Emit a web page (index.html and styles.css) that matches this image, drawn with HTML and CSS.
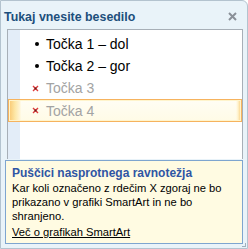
FILE: index.html
```html
<!DOCTYPE html>
<html>
<head>
<meta charset="utf-8">
<link rel="stylesheet" href="styles.css">
</head>
<body>
<div class="window">
  <div class="header">
    <span class="title">Tukaj vnesite besedilo</span>
    <svg class="close" width="9" height="9" viewBox="0 0 9 9"><path d="M1 1L8 8M8 1L1 8" stroke="#8a9098" stroke-width="2"/></svg>
  </div>
  <div class="editor">
    <div class="row">
      <span class="mark"><span class="dot"></span></span>
      <span class="txt">Točka 1 – dol</span>
    </div>
    <div class="row">
      <span class="mark"><span class="dot"></span></span>
      <span class="txt">Točka 2 – gor</span>
    </div>
    <div class="row off">
      <span class="mark"><svg width="7" height="7" viewBox="0 0 7 7"><path d="M1 1L6 6M6 1L1 6" stroke="#e03a3a" stroke-width="1.4"/><rect x="2.5" y="2.5" width="2" height="2" fill="#6a1a1a"/></svg></span>
      <span class="txt">Točka 3</span>
    </div>
    <div class="row off sel">
      <span class="mark"><svg width="7" height="7" viewBox="0 0 7 7"><path d="M1 1L6 6M6 1L1 6" stroke="#e03a3a" stroke-width="1.4"/><rect x="2.5" y="2.5" width="2" height="2" fill="#6a1a1a"/></svg></span>
      <span class="txt">Točka 4</span>
    </div>
  </div>
  <div class="note">
    <div class="note-title">Puščici nasprotnega ravnotežja</div>
    <p class="note-body">Kar koli označeno z rdečim X zgoraj ne bo prikazano v grafiki SmartArt in ne bo shranjeno.</p>
    <a class="note-link">Več o grafikah SmartArt</a>
  </div>
  <div class="grip"></div>
</div>
</body>
</html>
```
FILE: styles.css
```css
html, body {
  margin: 0;
  padding: 0;
  width: 248px;
  height: 249px;
  overflow: hidden;
  background: #ffffff;
}
.window {
  box-sizing: border-box;
  width: 248px;
  height: 249px;
  background: #e9f3f9;
  border: 1px solid #b3c3cf;
  border-top-right-radius: 6px;
  position: relative;
  font-family: "Liberation Sans", Arial, sans-serif;
}
.header {
  height: 28px;
  display: flex;
  align-items: center;
  justify-content: space-between;
  padding: 0 10px 0 3px;
}
.title {
  font-weight: bold;
  font-size: 12.4px;
  color: #1d4f7c;
  margin-top: 4px;
}
.close {
  margin-top: 3px;
}
.editor {
  box-sizing: border-box;
  margin-left: 6px;
  width: 236px;
  height: 130px;
  border: 1px solid #a7afb7;
  border-bottom: none;
  background: linear-gradient(to right, #e3edf8 0, #e3edf8 12px, #ffffff 12px);
  padding-top: 3px;
}
.row {
  box-sizing: border-box;
  height: 22px;
  display: flex;
  align-items: center;
  font-size: 14px;
  color: #000;
}
.mark {
  width: 38px;
  display: flex;
  justify-content: flex-end;
  padding-right: 7px;
  box-sizing: border-box;
}
.dot {
  width: 4px;
  height: 4px;
  border-radius: 50%;
  background: #000;
}
.off .txt {
  color: #a3a3a3;
}
.sel {
  height: 23px;
  width: 234px;
  border: 1px solid #f6b35e;
  box-shadow: inset 0 0 0 1px #fff4cc;
  background:
    linear-gradient(to right, #f9c770 0, #fde7a6 6px, #fff5d6 11px, rgba(255,255,255,0) 12px),
    linear-gradient(to left, #f9cd7a 0, #fff2cc 3px, rgba(255,255,255,0) 5px),
    linear-gradient(to bottom, #fffdf4, #fffbe6);
}
.sel .mark {
  width: 37px;
}
.note {
  box-sizing: border-box;
  margin: 1px 0 0 4px;
  width: 238px;
  height: 84px;
  border: 1px solid #7ea5cf;
  background: #fffbe2;
  padding: 5px 6px 0 6px;
  font-size: 11.2px;
  line-height: 14px;
  color: #000;
}
.note-title {
  font-weight: bold;
  font-size: 12px;
  color: #2f55a4;
  margin-bottom: 1px;
}
.note-body {
  margin: 0 0 2px 0;
}
.note-link {
  text-decoration: underline;
  color: #000;
}
.grip {
  position: absolute;
  right: 1px;
  bottom: 1px;
  width: 3px;
  height: 3px;
  border-right: 1px solid #a0b0bd;
  border-bottom: 1px solid #a0b0bd;
}
```
